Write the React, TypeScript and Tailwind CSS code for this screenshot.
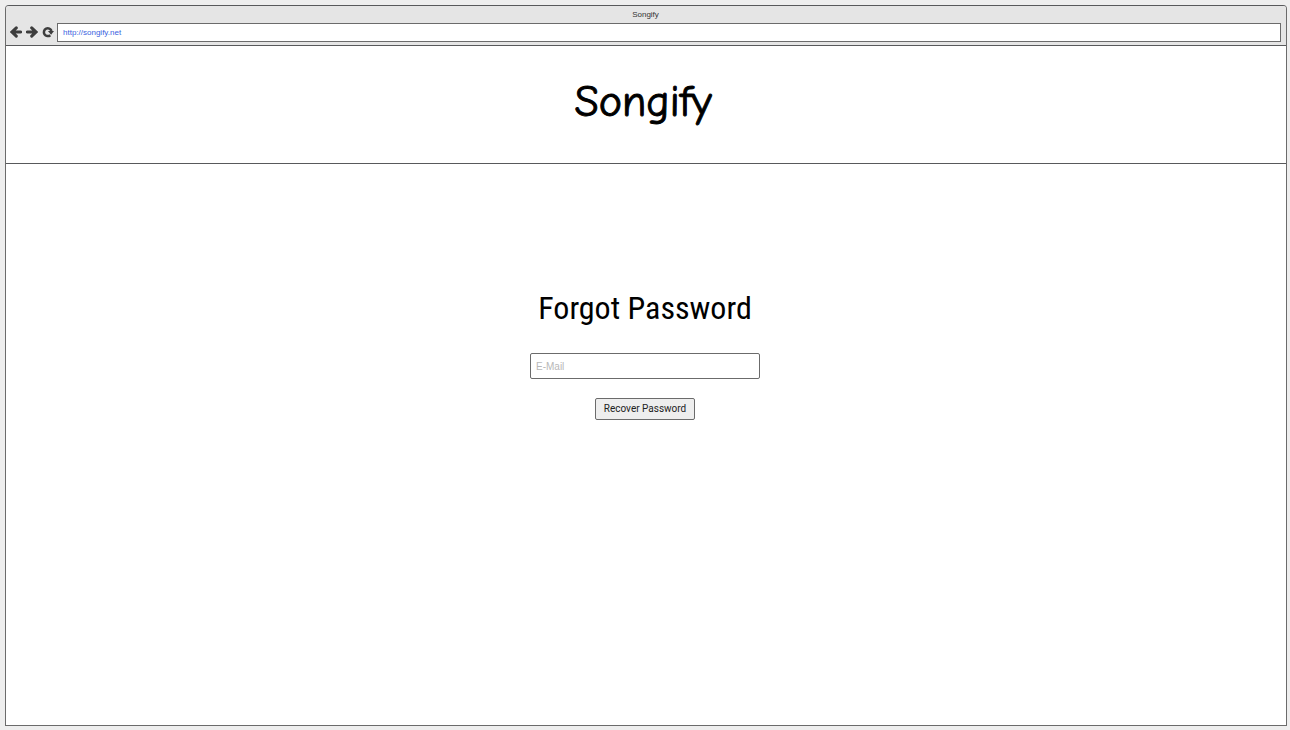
import type { ReactNode } from "react";

function ToolButton({ label, children }: { label: string; children: ReactNode }) {
  return (
    <button type="button" aria-label={label} className="flex size-4 items-center justify-center pb-[1px] text-[#3d3d3d]">
      <svg viewBox="0 0 12 12" className="size-3 shrink-0" fill="none" stroke="currentColor" aria-hidden="true">
        {children}
      </svg>
    </button>
  );
}

function BrowserBar() {
  return (
    <div className="flex h-10 flex-col border-b border-[#58595b] bg-[#e5e5e5]">
      <div className="flex h-[17px] items-center justify-center pr-[1px] text-[8px] leading-none text-[#333333]">Songify</div>
      <div className="flex h-[19px] items-center pr-[5px] pl-[2px]">
        <ToolButton label="Back">
          <path d="M6.3 1.9 2 6l4.3 4.1M2.4 6h8.2" strokeWidth="3" strokeLinecap="round" />
        </ToolButton>
        <ToolButton label="Forward">
          <path d="M5.7 1.9 10 6l-4.3 4.1M9.6 6H1.4" strokeWidth="3" strokeLinecap="round" />
        </ToolButton>
        <ToolButton label="Reload">
          <path d="M8.3 9.2A3.9 3.9 0 1 1 9.5 5" strokeWidth="2.5" />
          <path d="M5.9 4.9H12L9.1 8.8Z" fill="currentColor" stroke="none" />
        </ToolButton>
        <input
          type="text"
          aria-label="Address"
          defaultValue="http://songify.net"
          className="ml-[1px] h-[19px] min-w-0 flex-1 border border-[#6b6b6b] bg-white px-[5px] text-[8px] text-[#3b5fe0] outline-none"
        />
      </div>
    </div>
  );
}

export default function App() {
  return (
    <div className="flex min-h-screen flex-col bg-[#eeeeee] pt-[5px] pr-[3px] pb-1 pl-[5px] font-['Liberation_Sans',Arial,sans-serif]">
      <div className="flex flex-1 flex-col overflow-hidden rounded-t-[4px] border border-[#6b6b6b] border-t-[#58595b] bg-white">
        <BrowserBar />
        <header className="flex h-[118px] items-center justify-center border-b border-[#58595b] pr-[6px]">
          <div className="pb-[6px] font-['Coming_Soon','Comic_Neue','Open_Sans',sans-serif] text-[44px] leading-none text-black [-webkit-text-stroke:1px_black]">
            Songify
          </div>
        </header>
        <main className="flex flex-1 flex-col items-center pt-[124px] pr-[2px]">
          <h1 className="font-['Roboto_Condensed','Liberation_Sans_Narrow','Roboto',sans-serif] text-[32px] leading-10 text-black">
            Forgot Password
          </h1>
          <form className="flex flex-col items-center pt-[25px]" onSubmit={(e) => e.preventDefault()}>
            <input
              type="email"
              aria-label="E-Mail"
              placeholder="E-Mail"
              className="h-[26px] w-[230px] rounded-[2px] border border-[#6b6b6b] bg-white px-[5px] text-[10px] text-[#333333] outline-none placeholder:text-[#b8b8b8]"
            />
            <button
              type="submit"
              className="mt-[19px] h-[22px] rounded-[2px] border border-[#6b6b6b] bg-[#eeeeee] px-2 font-['Roboto',sans-serif] text-[10px] leading-none text-[#222222]"
            >
              Recover Password
            </button>
          </form>
        </main>
      </div>
    </div>
  );
}
